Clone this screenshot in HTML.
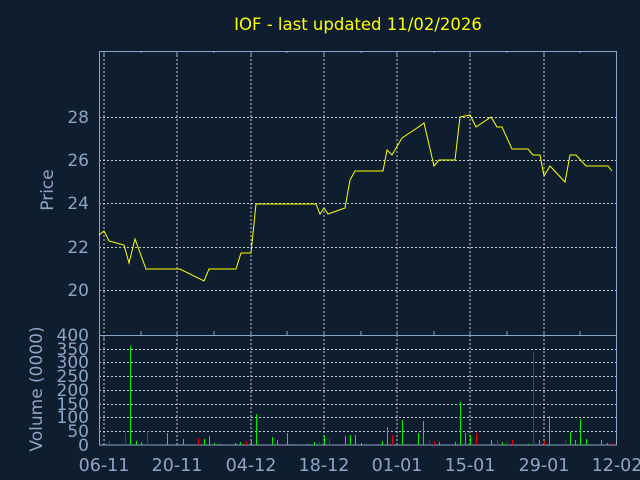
<!DOCTYPE html>
<html><head><meta charset="utf-8"><style>
html,body{margin:0;padding:0;background:#0f1e2f;width:640px;height:480px;overflow:hidden}
svg{display:block}
text{font-family:"DejaVu Sans","Liberation Sans",sans-serif}
</style></head><body>
<svg width="640" height="480" viewBox="0 0 640 480">
<rect width="640" height="480" fill="#0f1e2f"/>
<text x="358" y="30" fill="#ffff00" font-size="16.5" text-anchor="middle">IOF - last updated 11/02/2026</text>
<g stroke="#c8c8c8" stroke-dasharray="2,2" stroke-width="1" fill="none">
<path d="M104 51V445M177 51V445M251 51V445M324 51V445M397 51V445M470 51V445M544 51V445"/>
<path d="M99 117.5H617M99 160.5H617M99 203.5H617M99 247.5H617M99 290.5H617"/>
<path d="M99 349.5H617M99 362.5H617M99 376.5H617M99 390.5H617M99 404.5H617M99 417.5H617M99 431.5H617"/>
</g>
<g stroke="#8aa6c8" stroke-width="1" fill="none">
<rect x="99.5" y="51.5" width="517" height="393.5"/>
<path d="M99 335.5H617"/>
<path d="M104 51v4M141 51v2M177 51v4M214 51v2M251 51v4M287 51v2M324 51v4M361 51v2M397 51v4M434 51v2M470 51v4M507 51v2M544 51v4M580 51v2"/>
<path d="M104 335v4M141 335v-4M177 335v-4M214 335v-4M251 335v-4M287 335v-4M324 335v-4M361 335v-4M397 335v-4M434 335v-4M470 335v-4M507 335v-4M544 335v-4M580 335v-4"/>
</g>
<g fill="#8aa6c8" font-size="17" text-anchor="end">
<text x="89" y="123">28</text><text x="89" y="166">26</text><text x="89" y="209">24</text><text x="89" y="253">22</text><text x="89" y="296">20</text>
<text x="89" y="341">400</text><text x="89" y="355">350</text><text x="89" y="368">300</text><text x="89" y="382">250</text><text x="89" y="396">200</text><text x="89" y="410">150</text><text x="89" y="423">100</text><text x="89" y="437">50</text><text x="89" y="451">0</text>
</g>
<g fill="#8aa6c8" font-size="17.5" text-anchor="middle">
<text x="104" y="471">06-11</text><text x="177" y="471">20-11</text><text x="251" y="471">04-12</text><text x="324" y="471">18-12</text><text x="397" y="471">01-01</text><text x="470" y="471">15-01</text><text x="544" y="471">29-01</text><text x="617" y="471">12-02</text>
</g>
<text transform="translate(53,190) rotate(-90)" fill="#8aa6c8" font-size="17" text-anchor="middle">Price</text>
<text transform="translate(42,389) rotate(-90)" fill="#8aa6c8" font-size="17" text-anchor="middle">Volume (0000)</text>
<polyline fill="none" stroke="#ffff00" stroke-width="1" points="99,235 104,231 109,241 124,245 129,263 135,239 146,269 180,269 204,281 209,269 236,269 241,253 251,253 256,204 316,204 320,214 324,208 328,214 345,208 350,180 355,171 383,171 387,150 392,155 402,138 417,128 424,123 434,166 439,160 455,160 460,117 470,115 476,127 491,117 497,127 502,127 512,149 528,149 533,155 540,155 544,176 550,166 565,182 570,155 576,155 586,166 608,166 612,171"/>
<g stroke="#00ee00" stroke-width="1">
<path d="M130.5 445V346M136.5 445V441M141.5 445V442M167.5 445V433M183.5 445V439M204.5 445V439M209.5 445V436M214.5 445V443M219.5 445V444M235.5 445V443M240.5 445V442M251.5 445V440M256.5 445V414M272.5 445V437M277.5 445V440M287.5 445V433M293.5 445V444M308.5 445V444M314.5 445V442M324.5 445V436M345.5 445V436M350.5 445V435M355.5 445V435M382.5 445V441M387.5 445V427M402.5 445V420M418.5 445V433M423.5 445V421M439.5 445V442M455.5 445V442M460.5 445V402M465.5 445V433M470.5 445V435M491.5 445V440M502.5 445V442M528.5 445V444M539.5 445V440M549.5 445V416M570.5 445V432M575.5 445V440M580.5 445V419M586.5 445V439M601.5 445V440M607.5 445V443"/>
</g>
<g stroke="#ee0000" stroke-width="1">
<path d="M109.5 445V441M125.5 445V433M147.5 445V431M198.5 445V438M246.5 445V441M319.5 445V442M329.5 445V439M392.5 445V435M429.5 445V440M434.5 445V441M476.5 445V433M497.5 445V440M507.5 445V441M512.5 445V440M533.5 445V352M544.5 445V441M565.5 445V440M612.5 445V443"/>
</g>
<path d="M361.5 445V443" stroke="#8aa6c8"/>
</svg>
</body></html>
